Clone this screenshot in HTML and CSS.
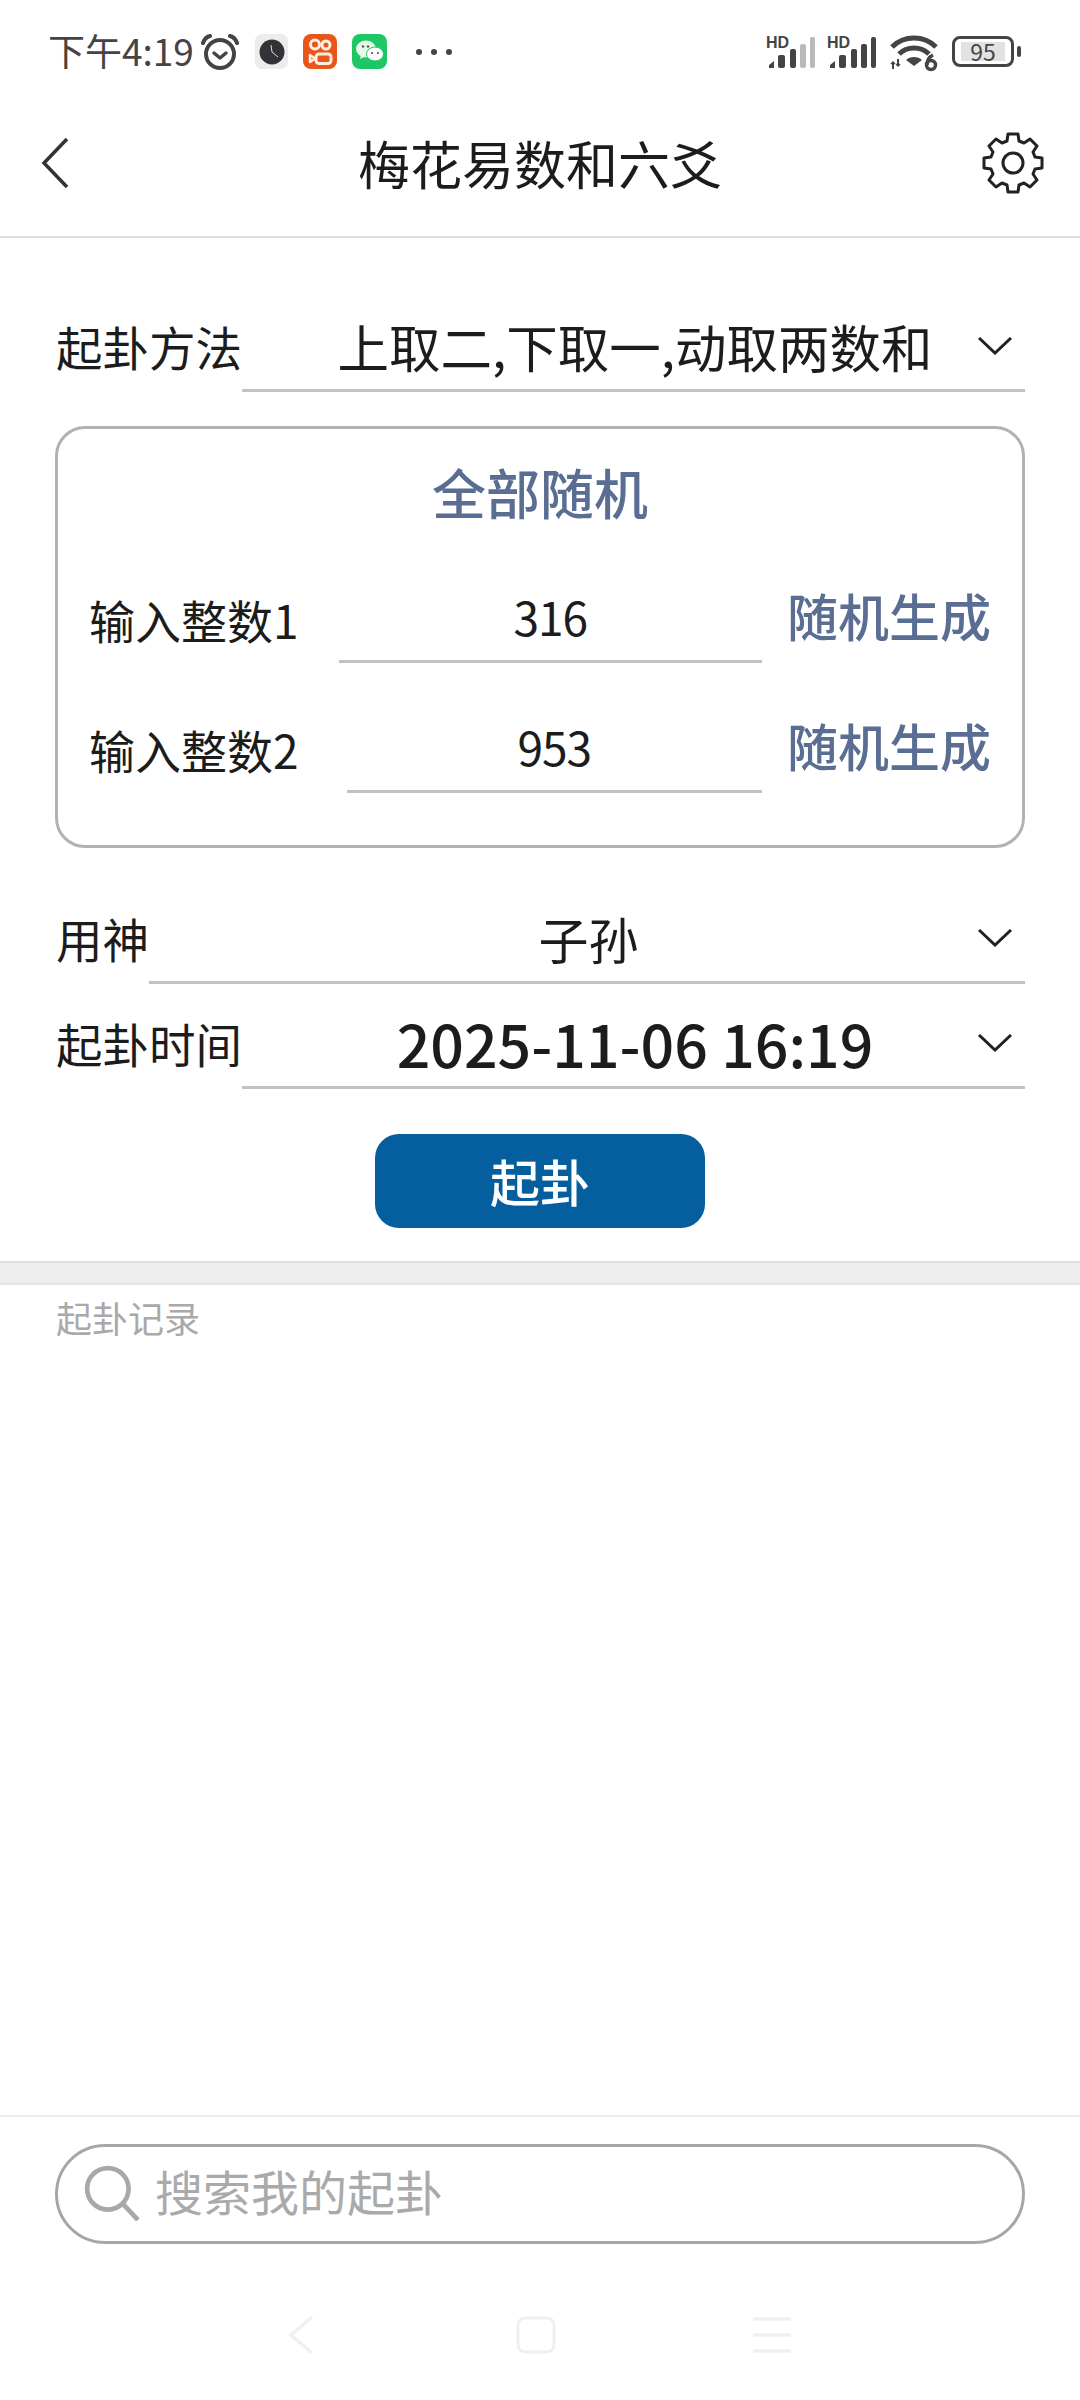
FILE: index.html
```html
<!DOCTYPE html>
<html lang="zh">
<head>
<meta charset="utf-8">
<title>梅花易数和六爻</title>
<link rel="stylesheet" href="styles.css">
</head>
<body>
<div class="page">

  <div class="statusBar">
    <span class="statusTime">下午4:19</span>
    <svg class="alarmIcon" width="38" height="36" viewBox="0 0 38 36" fill="none" stroke="#444" stroke-width="4" stroke-linecap="round" stroke-linejoin="round">
      <circle cx="19" cy="20" r="14"/>
      <path d="M13 19l6 5 6-5" stroke-width="3.5"/>
      <path d="M2 9c1-3 3-6 7-7M36 9c-1-3-3-6-7-7"/>
    </svg>
    <svg class="appIcon clockApp" width="33" height="35" viewBox="0 0 33 35">
      <rect width="33" height="35" rx="7" fill="#ececec"/>
      <circle cx="17" cy="18" r="12.5" fill="#333238"/>
      <path d="M17 18l6 5M17 18l-1-7" stroke="#ddd" stroke-width="1" fill="none"/>
    </svg>
    <svg class="appIcon" width="34" height="35" viewBox="0 0 34 35">
      <rect width="34" height="35" rx="8" fill="#e9561b"/>
      <g fill="none" stroke="#fdeee2" stroke-width="3">
        <circle cx="12" cy="10.500" r="4.500"/>
        <circle cx="23" cy="11" r="4"/>
        <rect x="13" y="20" width="15" height="9.500" rx="3"/>
        <path d="M7 21l5 3.500-5 3.500z" stroke-width="2.500" stroke-linejoin="round"/>
      </g>
    </svg>
    <svg class="appIcon" width="35" height="35" viewBox="0 0 35 35">
      <rect width="35" height="35" rx="8" fill="#1ec765"/>
      <ellipse cx="14" cy="15" rx="10" ry="8.500" fill="#e8f8e8"/>
      <path d="M9 21l-1 4 5-2.500z" fill="#e8f8e8"/>
      <ellipse cx="23" cy="20" rx="8.500" ry="7" fill="#fff" stroke="#1ec765" stroke-width="1"/>
      <circle cx="11" cy="12.500" r="1.200" fill="#555"/>
      <circle cx="16" cy="12.500" r="1.200" fill="#555"/>
      <circle cx="20" cy="19" r="1.100" fill="#555"/>
      <circle cx="26" cy="19" r="1.100" fill="#555"/>
    </svg>
    <span class="statusDots"><i></i><i></i><i></i></span>

    <span class="statusRight">
      <svg class="signalIcon" width="50" height="34" viewBox="0 0 50 34">
        <text x="0" y="13" class="hdText">HD</text>
        <g fill="#444">
          <path d="M3 33v-3l5-4v7z"/>
          <rect x="12" y="20" width="7" height="13" rx="2"/>
          <rect x="24" y="14" width="6" height="19" rx="2"/>
        </g>
        <g fill="#b9b9b9">
          <rect x="34" y="9" width="6" height="24" rx="2"/>
          <rect x="44" y="2" width="5" height="31" rx="2"/>
        </g>
      </svg>
      <svg class="signalIcon" width="50" height="34" viewBox="0 0 50 34">
        <text x="0" y="13" class="hdText">HD</text>
        <g fill="#444">
          <path d="M3 33v-3l5-4v7z"/>
          <rect x="12" y="20" width="7" height="13" rx="2"/>
          <rect x="24" y="14" width="6" height="19" rx="2"/>
          <rect x="34" y="9" width="6" height="24" rx="2"/>
          <rect x="44" y="2" width="5" height="31" rx="2"/>
        </g>
      </svg>
      <svg class="wifiIcon" width="48" height="38" viewBox="0 0 48 38" fill="none" stroke="#444" stroke-width="5">
        <path d="M2 13C14 1 34 1 46 13"/>
        <path d="M9 20C17 12 31 12 39 20"/>
        <path d="M16 26c4-4 12-4 16 0l-8 6z" fill="#444" stroke="none"/>
        <path d="M3 28v7M8 25v7" stroke-width="2"/>
        <path d="M1 30l2-2 2 2M6 30l2 2 2-2" stroke-width="1.500"/>
        <circle cx="41" cy="31" r="4.500" stroke-width="3.500"/>
        <path d="M37 31c0-5 2-8 6-10" stroke-width="3.500"/>
      </svg>
      <span class="battery"><span class="batteryLevel">95</span></span>
      <span class="batteryNub"></span>
    </span>
  </div>

  <div class="header">
    <svg class="backIcon" width="28" height="52" viewBox="0 0 28 52" fill="none" stroke="#333" stroke-width="3.500">
      <path d="M26 2L3 26l23 24"/>
    </svg>
    <span class="headerTitle">梅花易数和六爻</span>
    <svg class="gearIcon" width="62" height="62" viewBox="0 0 62 62" fill="none" stroke="#222" stroke-width="3" stroke-linejoin="round">
      <path d="M26 2h10l1 7 5 2 6-4 7 7-4 6 2 5 7 1v10l-7 1-2 5 4 6-7 7-6-4-5 2-1 7H26l-1-7-5-2-6 4-7-7 4-6-2-5-7-1V26l7-1 2-5-4-6 7-7 6 4 5-2z"/>
      <circle cx="31" cy="31" r="10"/>
    </svg>
  </div>

  <div class="form">
    <div class="formRow firstRow">
      <span class="rowLabel">起卦方法</span>
      <div class="rowField">
        <span></span>
        <span class="fieldValue">上取二,下取一,动取两数和</span>
        <svg class="chevron" width="34" height="18" viewBox="0 0 34 18" fill="none" stroke="#222" stroke-width="3"><path d="M1 1l16 15L33 1"/></svg>
      </div>
    </div>

    <div class="randomCard">
      <div class="cardTitle">全部随机</div>
      <div class="numberRow">
        <span class="numberLabel">输入整数1</span>
        <span class="numberInput">316</span>
        <span class="randomLink">随机生成</span>
      </div>
      <div class="numberRow secondNumber">
        <span class="numberLabel">输入整数2</span>
        <span class="numberInput">953</span>
        <span class="randomLink">随机生成</span>
      </div>
    </div>

    <div class="formRow godRow">
      <span class="rowLabel">用神</span>
      <div class="rowField">
        <span></span>
        <span class="fieldValue godValue">子孙</span>
        <svg class="chevron" width="34" height="18" viewBox="0 0 34 18" fill="none" stroke="#222" stroke-width="3"><path d="M1 1l16 15L33 1"/></svg>
      </div>
    </div>

    <div class="formRow timeRow">
      <span class="rowLabel">起卦时间</span>
      <div class="rowField">
        <span></span>
        <span class="fieldValue dateValue">2025-11-06 16:19</span>
        <svg class="chevron" width="34" height="18" viewBox="0 0 34 18" fill="none" stroke="#222" stroke-width="3"><path d="M1 1l16 15L33 1"/></svg>
      </div>
    </div>

    <div class="buttonRow">
      <div class="castButton">起卦</div>
    </div>
  </div>

  <div class="divider"></div>

  <div class="records">起卦记录</div>

  <div class="footer">
    <div class="searchBox">
      <svg class="searchIcon" width="56" height="56" viewBox="0 0 54 54" fill="none" stroke="#a8a8a8" stroke-width="4.500">
        <circle cx="23" cy="23" r="20"/>
        <path d="M38 38l14 15"/>
      </svg>
      <span class="searchText">搜索我的起卦</span>
    </div>
    <div class="navBar">
      <svg width="26" height="38" viewBox="0 0 26 38" fill="none" stroke="#f0f0f0" stroke-width="3.500"><path d="M24 1L3 19l21 18"/></svg>
      <svg class="navHome" width="40" height="38" viewBox="0 0 40 38" fill="none" stroke="#f0f0f0" stroke-width="3"><rect x="2" y="2" width="36" height="34" rx="7"/></svg>
      <svg width="40" height="38" viewBox="0 0 40 38" fill="none" stroke="#efefef" stroke-width="3.500"><path d="M1 3h38M1 19h38M1 35h38"/></svg>
    </div>
  </div>

</div>
</body>
</html>
```

FILE: styles.css
```css
* {
  box-sizing: border-box;
}

body {
  margin: 0;
  background: #fff;
  color: #1c1c1c;
  font-family: "Noto Sans CJK SC", "Noto Sans", sans-serif;
}

.page {
  display: flex;
  flex-direction: column;
  width: 1080px;
  height: 2400px;
  overflow: hidden;
}

/* status bar */

.statusBar {
  display: flex;
  align-items: center;
  height: 89px;
  padding: 14px 59px 0 48px;
}

.statusTime {
  margin-top: -4px;
  font-size: 37px;
  line-height: 44px;
  color: #444;
}

.alarmIcon {
  margin-left: 7px;
}

.appIcon {
  margin-left: 15px;
}

.clockApp {
  margin-left: 16px;
}

.statusDots {
  display: flex;
  gap: 9px;
  margin-left: 29px;
}

.statusDots i {
  width: 6px;
  height: 6px;
  border-radius: 50%;
  background: #444;
}

.statusRight {
  display: flex;
  align-items: center;
  margin-left: auto;
}

.signalIcon {
  margin-right: 11px;
}

.hdText {
  font-family: "Liberation Sans", sans-serif;
  font-size: 16px;
  font-weight: 700;
  fill: #444;
}

.wifiIcon {
  margin: 2px 14px 0 2px;
}

.battery {
  display: flex;
  align-items: center;
  justify-content: center;
  width: 62px;
  height: 31px;
  padding: 3px 6px;
  border: 3px solid #444;
  border-radius: 8px;
}

.batteryLevel {
  flex: 1;
  background: #e2e2e2;
  font-size: 23px;
  line-height: 19px;
  text-align: center;
  color: #444;
}

.batteryNub {
  width: 4px;
  height: 11px;
  margin-left: 3px;
  border-radius: 2px;
  background: #444;
}

/* header */

.header {
  display: grid;
  grid-template-columns: 1fr auto 1fr;
  align-items: center;
  height: 149px;
  padding: 0 36px;
  border-bottom: 2px solid #dcdcdc;
}

.headerTitle {
  font-size: 52px;
  line-height: 70px;
  color: #1c1c1c;
}

.backIcon {
  margin-left: 5px;
}

.gearIcon {
  justify-self: end;
}

/* form */

.form {
  padding: 0 55px;
}

.formRow {
  display: flex;
  height: 70px;
}

.firstRow {
  margin-top: 84px;
}

.godRow {
  margin-top: 66px;
}

.timeRow {
  margin-top: 35px;
}

.rowLabel {
  display: flex;
  align-items: center;
  padding: 0 0 22px 1px;
  font-size: 46.500px;
  line-height: 54px;
  white-space: nowrap;
}

.rowField {
  display: grid;
  flex: 1;
  grid-template-columns: 66px 1fr 50px;
  align-items: center;
  padding: 0 13px 20px 0;
  border-bottom: 3px solid #c2c2c2;
}

.fieldValue {
  font-size: 51.500px;
  line-height: 40px;
  text-align: center;
  white-space: nowrap;
}

.godValue {
  font-size: 50px;
}

.dateValue {
  font-size: 59px;
  font-weight: 500;
}

.chevron {
  justify-self: end;
}

.randomCard {
  height: 422px;
  margin-top: 34px;
  padding-top: 28px;
  border: 3px solid #b2b2b2;
  border-radius: 30px;
}

.cardTitle {
  font-size: 54px;
  line-height: 70px;
  font-weight: 500;
  text-align: center;
  color: #5a6d92;
}

.numberRow {
  display: flex;
  align-items: center;
  height: 80px;
  margin-top: 56px;
  padding: 0 31px 0 31px;
}

.secondNumber {
  margin-top: 50px;
}

.numberLabel {
  padding-bottom: 9px;
  font-size: 46px;
  line-height: 54px;
  white-space: nowrap;
}

.numberInput {
  flex: 1;
  height: 80px;
  margin-left: 40px;
  border-bottom: 3px solid #c2c2c2;
  font-size: 46px;
  letter-spacing: -1px;
  line-height: 66px;
  text-align: center;
}

.secondNumber .numberInput {
  margin-left: 48px;
}

.randomLink {
  margin-left: 25px;
  padding-bottom: 16px;
  font-size: 51px;
  line-height: 60px;
  font-weight: 500;
  color: #5a6d92;
  white-space: nowrap;
}

.buttonRow {
  display: flex;
  justify-content: center;
  margin-top: 45px;
}

.castButton {
  width: 330px;
  height: 94px;
  border-radius: 24px;
  background: #055f9f;
  font-size: 50px;
  font-weight: 500;
  line-height: 92px;
  text-align: center;
  color: #fff;
}

.divider {
  height: 24px;
  margin-top: 33px;
  border-top: 2px solid #dedede;
  border-bottom: 2px solid #e4e4e4;
  background: #eeeeee;
}

.records {
  flex: 1;
  padding: 10px 0 0 56px;
  font-size: 36px;
  line-height: 44px;
  color: #a9a9a9;
}

/* search and nav */

.footer {
  height: 285px;
  padding-top: 27px;
  border-top: 2px solid #ececec;
}

.searchBox {
  display: flex;
  align-items: center;
  height: 100px;
  margin: 0 55px;
  padding-left: 26px;
  border: 3px solid #a6a6a6;
  border-radius: 50px;
}

.searchIcon {
  margin-top: -3px;
}

.searchText {
  margin: -9px 0 0 15px;
  font-size: 48px;
  line-height: 56px;
  color: #aaa;
}

.navBar {
  display: flex;
  justify-content: space-between;
  width: 504px;
  margin: 72px 0 0 288px;
}

.navHome {
  margin-left: 6px;
}
```
